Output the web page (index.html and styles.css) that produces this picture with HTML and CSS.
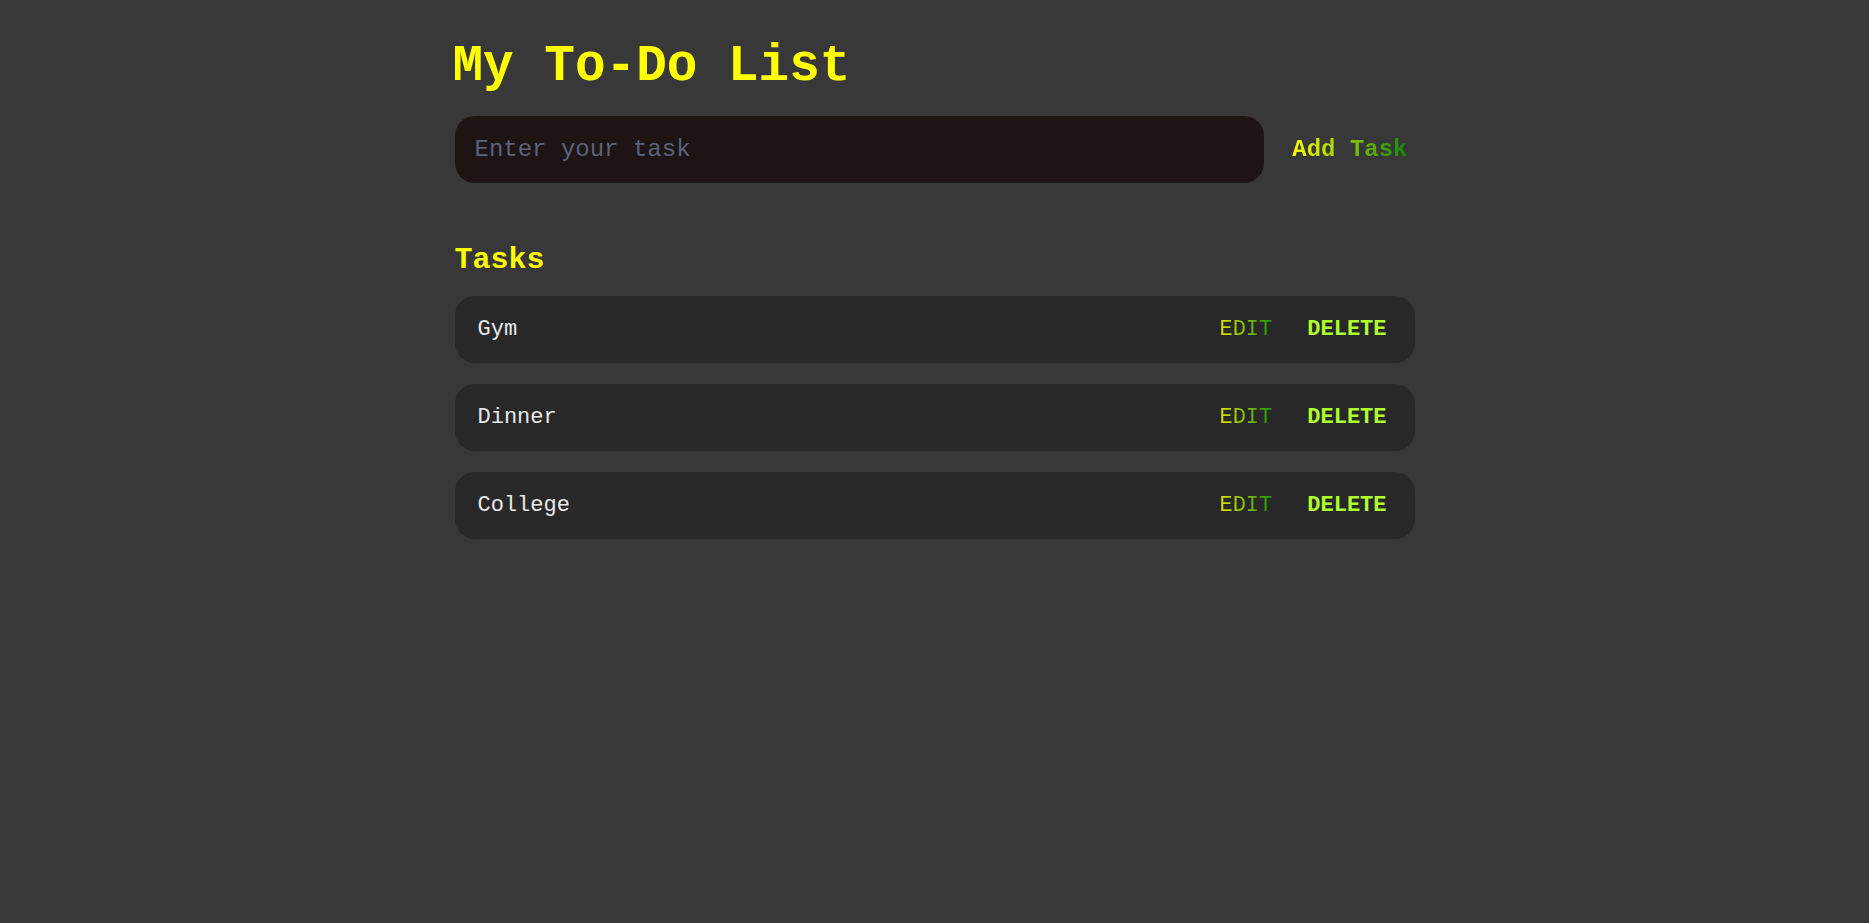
FILE: index.html
```html
<!DOCTYPE html>
<html lang="en">
<head>
<meta charset="utf-8">
<title>My To-Do List</title>
<link rel="stylesheet" href="styles.css">
</head>
<body>
<main class="app">
  <h1 class="title">My To-Do List</h1>
  <form class="add-form">
    <input class="task-input" type="text" placeholder="Enter your task">
    <button class="add-btn" type="button"><span class="grad">Add Task</span></button>
  </form>
  <h2 class="section-title">Tasks</h2>
  <ul class="task-list">
    <li class="task">
      <span class="task-name">Gym</span>
      <div class="task-actions">
        <button class="edit-btn" type="button"><span class="grad">EDIT</span></button>
        <button class="delete-btn" type="button">DELETE</button>
      </div>
    </li>
    <li class="task">
      <span class="task-name">Dinner</span>
      <div class="task-actions">
        <button class="edit-btn" type="button"><span class="grad">EDIT</span></button>
        <button class="delete-btn" type="button">DELETE</button>
      </div>
    </li>
    <li class="task">
      <span class="task-name">College</span>
      <div class="task-actions">
        <button class="edit-btn" type="button"><span class="grad">EDIT</span></button>
        <button class="delete-btn" type="button">DELETE</button>
      </div>
    </li>
  </ul>
</main>
</body>
</html>
```

FILE: styles.css
```css
html, body {
  margin: 0;
  padding: 0;
  background: #383838;
  min-height: 100%;
}

body {
  font-family: "Liberation Mono", "Courier New", monospace;
  color: #e6e6e6;
}

.app {
  width: 960px;
  margin: 0 auto;
  padding-top: 39px;
}

.title {
  margin: 0;
  margin-left: -2px;
  font-size: 51px;
  line-height: 56px;
  font-weight: 700;
  color: #ffff00;
}

.add-form {
  display: flex;
  align-items: center;
  gap: 20px;
  margin-top: 21px;
}

.task-input {
  flex: 1;
  height: 67px;
  box-sizing: border-box;
  border: none;
  outline: none;
  border-radius: 20px;
  background: #1f1414;
  padding: 0 20px;
  font-family: "Liberation Mono", "Courier New", monospace;
  font-size: 24px;
  color: #e6e6e6;
}

.task-input::placeholder {
  color: #58637e;
}

.add-btn {
  background: none;
  border: none;
  padding: 0 7px 0 8px;
  font-family: "Liberation Mono", "Courier New", monospace;
  font-size: 24px;
  font-weight: 700;
  cursor: pointer;
}

.grad {
  background: linear-gradient(90deg, #ffff00, #10880a);
  -webkit-background-clip: text;
  background-clip: text;
  color: transparent;
}

.section-title {
  margin: 60px 0 0;
  font-size: 30px;
  line-height: 34px;
  font-weight: 700;
  color: #ffff00;
}

.task-list {
  list-style: none;
  margin: 19px 0 0;
  padding: 0;
  display: flex;
  flex-direction: column;
  gap: 21px;
}

.task {
  display: flex;
  align-items: center;
  justify-content: space-between;
  height: 67px;
  box-sizing: border-box;
  padding: 0 28px 0 23px;
  background: #282828;
  border-radius: 20px;
}

.task-name {
  font-size: 22px;
  color: #e8e8e8;
}

.task-actions {
  display: flex;
  gap: 35px;
}

.edit-btn,
.delete-btn {
  background: none;
  border: none;
  padding: 0;
  font-family: "Liberation Mono", "Courier New", monospace;
  font-size: 22px;
  cursor: pointer;
}

.edit-btn {
  font-weight: 400;
}

.edit-btn .grad {
  background: linear-gradient(90deg, #e4e400, #1e9a00);
  -webkit-background-clip: text;
  background-clip: text;
}

.delete-btn {
  font-weight: 700;
  color: #adff2f;
}
```
